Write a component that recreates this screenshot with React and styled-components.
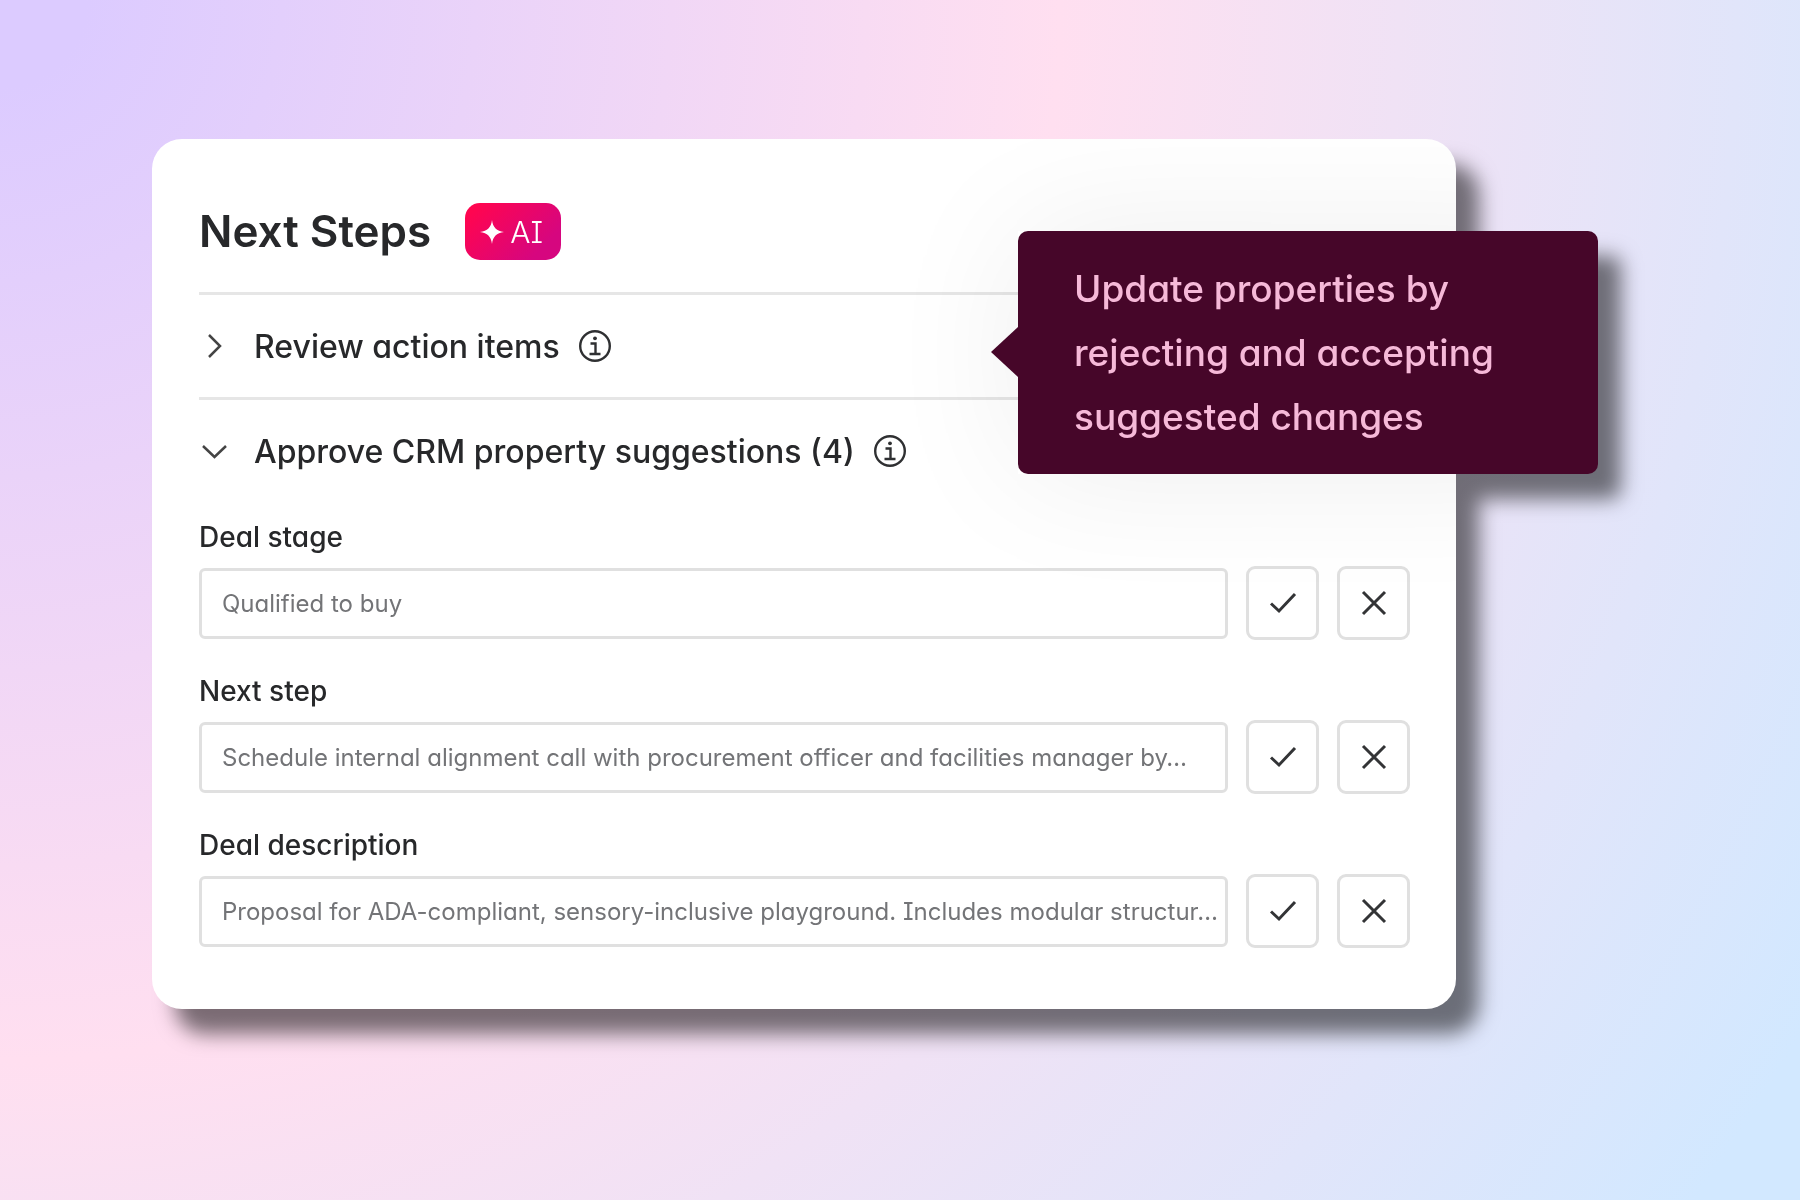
import React, { useState } from 'react'
import styled, { createGlobalStyle } from 'styled-components'

const GlobalStyle = createGlobalStyle`
  * {
    box-sizing: border-box;
  }
  body {
    margin: 0;
    color: #27282a;
    font-family: Inter, "Noto Sans", sans-serif;
    font-feature-settings: "cv08", "cv11";
  }
  button, input {
    font: inherit;
    font-feature-settings: inherit;
    color: inherit;
  }
`

const Stage = styled.main`
  min-height: 100vh;
  padding: 139px 344px 139px 152px;
  background: radial-gradient(circle at 0 0, #dccbff 4%, #ffdff0 49%, #d2e8ff 96%);
`

const Card = styled.section`
  position: relative;
  padding: 64px 46px 61px 47px;
  border-radius: 30px;
  background: #fff;
  filter: drop-shadow(23px 25px 10px rgba(0, 0, 0, 0.52));
`

const CardHeader = styled.header`
  display: flex;
  align-items: center;
  gap: 34px;
  padding-bottom: 32px;
`

const Title = styled.h1`
  margin: 0;
  font-size: 44px;
  line-height: 57px;
  font-weight: 600;
`

const Badge = styled.span`
  display: flex;
  align-items: center;
  gap: 6px;
  height: 57px;
  padding: 0 18px 0 15px;
  border-radius: 15px;
  background: linear-gradient(135deg, #ff0550 10%, #d6067f 80%);
  color: #fff;
  font-size: 30px;
  font-weight: 300;
`

const SectionRow = styled.div`
  display: flex;
  align-items: center;
  gap: 18px;
  height: 105px;
  border-top: 3px solid #e6e6e6;
`

const SectionToggle = styled.button`
  display: flex;
  align-items: center;
  gap: 24px;
  padding: 0;
  border: 0;
  background: none;
  font-size: 32px;
  font-weight: 500;
  cursor: pointer;
`

const InfoButton = styled.button`
  display: flex;
  padding: 0;
  border: 0;
  background: none;
  cursor: pointer;
`

const Fields = styled.div`
  display: grid;
  gap: 28px;
  padding-top: 12px;
`

const Field = styled.div`
  display: grid;
  gap: 6px;
`

const FieldLabel = styled.label`
  font-size: 28px;
  line-height: 46px;
  font-weight: 500;
`

const FieldRow = styled.div`
  display: flex;
  align-items: center;
  gap: 18px;
`

const FieldInput = styled.input`
  flex: 1;
  min-width: 0;
  height: 71px;
  padding: 0 4px 0 20px;
  border: 3px solid #e0e0e0;
  border-radius: 6px;
  background: #fff;
  color: #737477;
  font-size: 24px;
  text-overflow: ellipsis;
`

const ActionButton = styled.button`
  display: flex;
  align-items: center;
  justify-content: center;
  width: 73px;
  height: 74px;
  padding: 0;
  border: 3px solid #e0e0e0;
  border-radius: 9px;
  background: #fff;
  cursor: pointer;
`

/* soft glow that the tooltip casts on the card, cut off at the card's edge */
const Glow = styled.div`
  position: absolute;
  inset: 0;
  overflow: hidden;
  border-radius: 30px;
  pointer-events: none;

  &::after {
    content: "";
    position: absolute;
    top: 92px;
    right: -142px;
    width: 580px;
    height: 243px;
    box-shadow: 0 0 140px rgba(0, 0, 0, 0.07);
  }
`

const Tooltip = styled.div`
  position: absolute;
  top: 92px;
  right: -142px;
  width: 580px;
  padding: 26px 56px 25px;
  border-radius: 10px;
  background: #460629;
  color: #f6b9d8;
  font-size: 37px;
  line-height: 64px;
  font-weight: 500;
`

const TooltipArrow = styled.span`
  position: absolute;
  top: 96px;
  right: 100%;
  border: solid transparent;
  border-width: 25px 27px 25px 0;
  border-right-color: #460629;
`

const TooltipLine = styled.span`
  display: block;
  white-space: nowrap;
`

const Sparkle = () => (
  <svg width="24" height="24" viewBox="0 0 24 24" fill="#fff" aria-hidden="true">
    <path d="M12 0C13 7.500 16.500 11 24 12C16.500 13 13 16.500 12 24C11 16.500 7.500 13 0 12C7.500 11 11 7.500 12 0Z" />
  </svg>
)

const Chevron = ({ open }) => (
  <svg width="31" height="32" viewBox="0 0 31 32" fill="none" stroke="#444" strokeWidth="2.500" aria-hidden="true">
    <path d={open ? 'M4 11L15.500 22L27 11' : 'M10 5L21 16L10 27'} />
  </svg>
)

const InfoIcon = () => (
  <svg width="34" height="34" viewBox="0 0 34 34" fill="none" stroke="#2f3032" strokeWidth="2.400" aria-hidden="true">
    <circle cx="17" cy="17" r="14.800" />
    <path d="M12.500 14.500H17.500V25M11.500 25H22.500" />
    <circle cx="17" cy="9.300" r="1.900" fill="#2f3032" stroke="none" />
  </svg>
)

const CheckIcon = () => (
  <svg width="28" height="28" viewBox="0 0 28 28" fill="none" stroke="#333436" strokeWidth="3" aria-hidden="true">
    <path d="M2 14.500L10 22L26 5" />
  </svg>
)

const CrossIcon = () => (
  <svg width="28" height="28" viewBox="0 0 28 28" fill="none" stroke="#333436" strokeWidth="3" aria-hidden="true">
    <path d="M3 3L25 25M25 3L3 25" />
  </svg>
)

const suggestions = [
  { id: 'stage', label: 'Deal stage', value: 'Qualified to buy' },
  {
    id: 'next-step',
    label: 'Next step',
    value: 'Schedule internal alignment call with procurement officer and facilities manager by…',
  },
  {
    id: 'description',
    label: 'Deal description',
    value: 'Proposal for ADA-compliant, sensory-inclusive playground. Includes modular structur…',
  },
]

const Suggestion = ({ id, label, value }) => {
  const [text, setText] = useState(value)

  return (
    <Field>
      <FieldLabel htmlFor={id}>{label}</FieldLabel>
      <FieldRow>
        <FieldInput id={id} type="text" value={text} onChange={(e) => setText(e.target.value)} />
        <ActionButton type="button" aria-label={`Accept ${label}`}>
          <CheckIcon />
        </ActionButton>
        <ActionButton type="button" aria-label={`Reject ${label}`}>
          <CrossIcon />
        </ActionButton>
      </FieldRow>
    </Field>
  )
}

const Section = ({ title, open, onToggle }) => (
  <SectionRow>
    <SectionToggle type="button" aria-expanded={open} onClick={onToggle}>
      <Chevron open={open} />
      {title}
    </SectionToggle>
    <InfoButton type="button" aria-label={`About ${title}`}>
      <InfoIcon />
    </InfoButton>
  </SectionRow>
)

const App = () => {
  const [reviewOpen, setReviewOpen] = useState(false)
  const [approveOpen, setApproveOpen] = useState(true)

  return (
    <>
      <GlobalStyle />
      <Stage>
        <Card>
          <CardHeader>
            <Title>Next Steps</Title>
            <Badge>
              <Sparkle />
              AI
            </Badge>
          </CardHeader>
          <Section title="Review action items" open={reviewOpen} onToggle={() => setReviewOpen(!reviewOpen)} />
          <Section
            title="Approve CRM property suggestions (4)"
            open={approveOpen}
            onToggle={() => setApproveOpen(!approveOpen)}
          />
          {approveOpen && (
            <Fields>
              {suggestions.map((item) => (
                <Suggestion key={item.id} {...item} />
              ))}
            </Fields>
          )}
          <Glow />
          <Tooltip role="tooltip">
            <TooltipArrow />
            <TooltipLine>Update properties by</TooltipLine>
            <TooltipLine>rejecting and accepting</TooltipLine>
            <TooltipLine>suggested changes</TooltipLine>
          </Tooltip>
        </Card>
      </Stage>
    </>
  )
}

export default App
